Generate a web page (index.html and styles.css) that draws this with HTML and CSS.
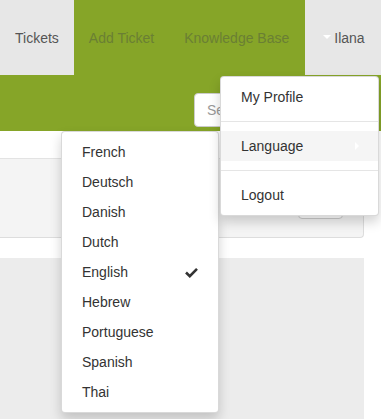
FILE: index.html
```html
<!DOCTYPE html>
<html lang="en">
  <head>
    <meta charset="UTF-8" />
    <meta name="viewport" content="width=device-width, initial-scale=1.0" />
    <title>Helpdesk</title>
    <link rel="stylesheet" href="styles.css">
  </head>
  <body>
    <nav class="navbar">
      <a class="nav-item active">Tickets</a>
      <a class="nav-item">Add Ticket</a>
      <a class="nav-item kb">Knowledge Base</a>
      <a class="nav-item user"><span class="caret-down"></span>Ilana</a>
    </nav>

    <div class="header-band">
      <input class="search" type="text" placeholder="Search" />
    </div>

    <div class="content">
      <div class="strip"></div>
      <div class="panel">
        <button class="panel-btn"></button>
      </div>
      <div class="gap"></div>
      <div class="panel panel-body"></div>
    </div>

    <!-- user dropdown -->
    <ul class="dropdown user-menu">
      <li><a>My Profile</a></li>
      <li class="divider"></li>
      <li class="hover"><a>Language <span class="caret-right"></span></a></li>
      <li class="divider"></li>
      <li><a>Logout</a></li>
    </ul>

    <!-- language submenu -->
    <ul class="dropdown lang-menu">
      <li><a>French</a></li>
      <li><a>Deutsch</a></li>
      <li><a>Danish</a></li>
      <li><a>Dutch</a></li>
      <li>
        <a>English
          <svg class="check" width="13" height="11" viewBox="0 0 13 11">
            <path d="M1 5.5 L4.8 9.2 L12 1.8" fill="none" stroke="#333" stroke-width="2.6" />
          </svg>
        </a>
      </li>
      <li><a>Hebrew</a></li>
      <li><a>Portuguese</a></li>
      <li><a>Spanish</a></li>
      <li><a>Thai</a></li>
    </ul>
  </body>
</html>
```

FILE: styles.css
```css
body {
  font-family: "Liberation Sans", Arial, sans-serif;
  font-size: 14px;
  margin: 0;
  background-color: #fff;
  color: #333;
  position: relative;
  height: 419px;
  overflow: hidden;
}
.navbar {
  display: flex;
  height: 75px;
  background-color: #86a528;
}
.nav-item {
  display: flex;
  align-items: center;
  flex-shrink: 0;
  white-space: nowrap;
  padding: 0 15px;
  color: #6a7f34;
  font-size: 14px;
}
.nav-item.active {
  background-color: #e7e7e7;
  color: #555;
}
.nav-item.kb {
  padding-right: 16px;
}
.nav-item.user {
  background-color: #e7e7e7;
  color: #555;
  flex: 1;
  padding-left: 18px;
}
.caret-down {
  display: inline-block;
  width: 0;
  height: 0;
  border-top: 4px solid #fff;
  border-left: 4px solid transparent;
  border-right: 4px solid transparent;
  margin-right: 3px;
  margin-top: -2px;
}
.header-band {
  height: 56px;
  background-color: #86a528;
  display: flex;
  justify-content: flex-end;
  align-items: flex-start;
  box-sizing: border-box;
  padding: 18px 27px 0 0;
}
.search {
  width: 160px;
  height: 34px;
  box-sizing: border-box;
  border: 1px solid #ccc;
  border-radius: 4px;
  padding: 6px 12px;
  font-family: inherit;
  font-size: 14px;
  color: #555;
}
.search::placeholder {
  color: #999;
}
.strip {
  height: 27px;
  background-color: #fff;
}
.panel {
  height: 80px;
  box-sizing: border-box;
  margin-right: 17px;
  background-color: #f4f4f4;
  border-top: 1px solid #e3e3e3;
  border-right: 1px solid #ddd;
  border-bottom: 1px solid #ddd;
  border-radius: 0 0 4px 0;
  display: flex;
  justify-content: flex-end;
  align-items: flex-end;
  padding: 0 20px 18px 0;
}
.panel-btn {
  width: 45px;
  height: 30px;
  background-color: #fff;
  border: 1px solid #ccc;
  border-radius: 4px;
}
.gap {
  height: 20px;
}
.panel-body {
  height: 170px;
  background-color: #ececec;
  border: none;
  border-radius: 0;
}
.dropdown {
  position: absolute;
  list-style: none;
  margin: 0;
  padding: 5px 0;
  background-color: #fff;
  border: 1px solid rgba(0, 0, 0, 0.15);
  border-radius: 4px;
  box-shadow: 0 6px 12px rgba(0, 0, 0, 0.175);
}
.dropdown li a {
  display: flex;
  align-items: center;
  justify-content: space-between;
  height: 30px;
  padding: 0 20px;
  color: #333;
  white-space: nowrap;
}
.dropdown .divider {
  height: 1px;
  margin: 9px 0;
  background-color: #e5e5e5;
}
.dropdown li.hover a {
  background-color: #f5f5f5;
}
.user-menu {
  top: 76px;
  left: 220px;
  width: 157px;
  z-index: 2;
}
.lang-menu {
  top: 131px;
  left: 61px;
  width: 156px;
  z-index: 1;
}
.caret-right {
  display: inline-block;
  width: 0;
  height: 0;
  border-left: 4px solid #fff;
  border-top: 4px solid transparent;
  border-bottom: 4px solid transparent;
  margin-right: -1px;
}
```
